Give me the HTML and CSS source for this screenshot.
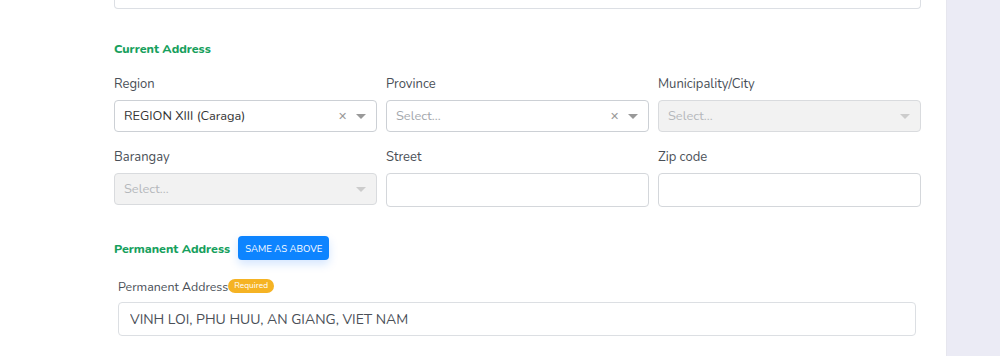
FILE: index.html
```html
<!DOCTYPE html>
<html lang="en">
<head>
    <meta charset="UTF-8">
    <meta name="viewport" content="width=device-width, initial-scale=1.0">
    <title>Address</title>
    <link rel="stylesheet" href="styles.css">
</head>
<body>

<div class="page">
    <div class="card">
        <!-- alanin sonu (ustteki input) -->
        <div class="prev-input"></div>

        <h3 class="section-title">Current Address</h3>
        <div class="grid">
            <div class="field">
                <label>Region</label>
                <div class="select">
                    <span class="value">REGION XIII (Caraga)</span>
                    <span class="clear">&#x2715;</span>
                    <span class="caret"></span>
                </div>
            </div>
            <div class="field">
                <label>Province</label>
                <div class="select">
                    <span class="value placeholder">Select...</span>
                    <span class="clear">&#x2715;</span>
                    <span class="caret"></span>
                </div>
            </div>
            <div class="field">
                <label>Municipality/City</label>
                <div class="select disabled">
                    <span class="value placeholder">Select...</span>
                    <span class="caret"></span>
                </div>
            </div>
            <div class="field">
                <label>Barangay</label>
                <div class="select disabled">
                    <span class="value placeholder">Select...</span>
                    <span class="caret"></span>
                </div>
            </div>
            <div class="field">
                <label>Street</label>
                <input type="text" class="input">
            </div>
            <div class="field">
                <label>Zip code</label>
                <input type="text" class="input">
            </div>
        </div>

        <div class="section-head">
            <h3 class="section-title">Permanent Address</h3>
            <button type="button" class="btn-same">Same as above</button>
        </div>

        <div class="perm">
            <label>Permanent Address<span class="badge">Required</span></label>
            <input type="text" class="input big" value="VINH LOI, PHU HUU, AN GIANG, VIET NAM">
        </div>
    </div>
    <div class="side"></div>
</div>

</body>
</html>
```

FILE: styles.css
```css
body {
    margin: 0;
    font-family: 'Nunito', 'Lato', sans-serif;
    background-color: #fff;
    color: #4a4f57;
}
.page {
    display: flex;
    height: 356px;
    overflow: hidden;
}
.card {
    width: 807px;
    padding: 0 25px 0 114px;
    background-color: #fff;
}
.side {
    flex: 1;
    background-color: #ebebf5;
    border-left: 1px solid #e6e6ee;
}
.prev-input {
    height: 8px;
    border: 1px solid #dcdfe4;
    border-top: none;
    border-radius: 0 0 4px 4px;
}
.section-title {
    margin: 0;
    font-size: 12.4px;
    font-weight: 800;
    color: #17a05d;
}
.card > .section-title {
    margin-top: 31px;
}
.grid {
    display: grid;
    grid-template-columns: repeat(3, 263px);
    column-gap: 9px;
    row-gap: 17px;
    margin-top: 19px;
}
.field label {
    display: block;
    font-size: 13px;
    color: #4a4f57;
    margin-bottom: 7px;
    line-height: 17px;
}
.select {
    display: flex;
    align-items: center;
    height: 32px;
    box-sizing: border-box;
    border: 1px solid #ccd0d5;
    border-radius: 4px;
    padding: 0 10px 0 9px;
    background-color: #fff;
}
.select .value {
    flex: 1;
    font-size: 12.8px;
    color: #333;
}
.select .placeholder {
    color: #a3a7ad;
}
.select.disabled {
    background-color: #f2f2f2;
    border-color: #d9dbde;
}
.select.disabled .placeholder {
    color: #b5b8bc;
}
.clear {
    font-size: 11px;
    color: #999;
    margin-right: 9px;
}
.caret {
    width: 0;
    height: 0;
    border-left: 5px solid transparent;
    border-right: 5px solid transparent;
    border-top: 5px solid #999;
}
.disabled .caret {
    border-top-color: #ccc;
}
.input {
    display: block;
    width: 100%;
    height: 34px;
    box-sizing: border-box;
    border: 1px solid #d4d7db;
    border-radius: 4px;
    background-color: #fff;
    font-family: inherit;
}
.section-head {
    display: flex;
    align-items: center;
    gap: 8px;
    margin-top: 29px;
}
.btn-same {
    background-color: #0d84ff;
    color: #fff;
    border: none;
    border-radius: 4px;
    font-family: inherit;
    font-size: 9.6px;
    text-transform: uppercase;
    height: 24px;
    padding: 0 7px;
    box-shadow: 0 4px 10px rgba(13, 110, 253, 0.18);
}
.perm {
    padding: 18px 5px 0 4px;
}
.perm label {
    display: flex;
    align-items: center;
    font-size: 12.4px;
    color: #4a4f57;
    line-height: 17px;
    margin-bottom: 7px;
}
.badge {
    background-color: #f5b324;
    color: #fff;
    font-size: 8.4px;
    line-height: 14px;
    border-radius: 8px;
    padding: 0 6px;
    margin-top: -2px;
}
.input.big {
    height: 34px;
    padding: 0 11px;
    font-size: 14px;
    color: #4a4f57;
    border-color: #dcdfe3;
}
```
